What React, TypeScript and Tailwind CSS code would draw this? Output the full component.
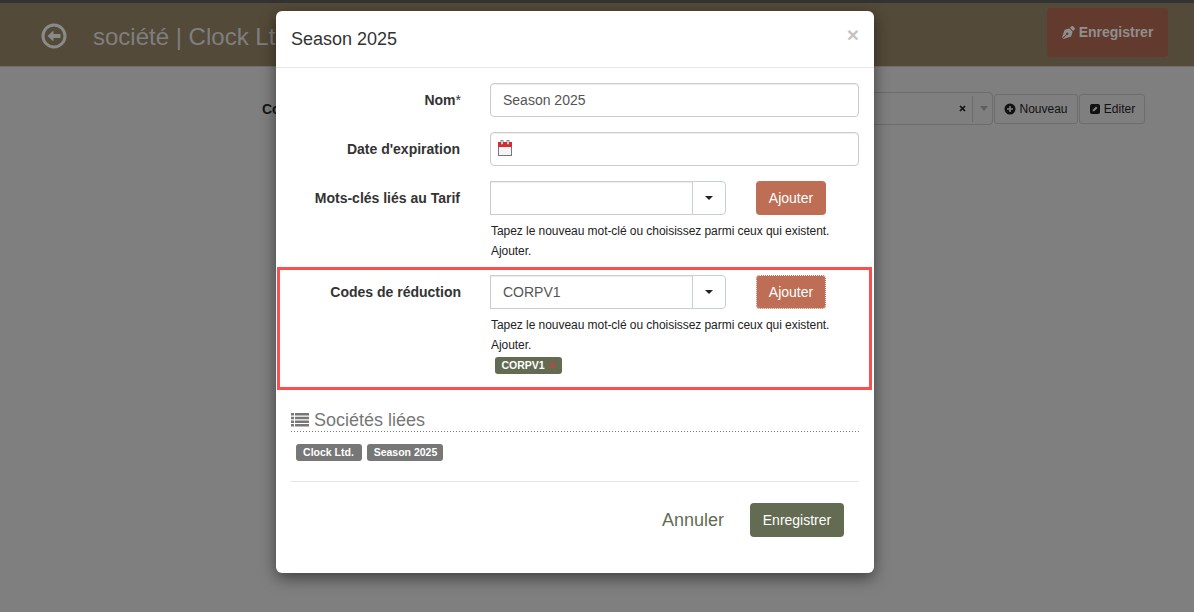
import React from "react";
import { FaPenNib } from "react-icons/fa";

const Caret = () => <span className="block w-0 h-0 border-x-[4px] border-x-transparent border-t-[4px] border-t-[#222]" />;

const Help = () => (
  <p className="text-[12px] leading-[20px] tracking-[-0.05px] text-[#222] mt-[6px] ml-[1px]">
    Tapez le nouveau mot-clé ou choisissez parmi ceux qui existent.<br />Ajouter.
  </p>
);

const Combo = ({ value, focus }: { value?: string; focus?: boolean }) => (
  <div className="flex items-start">
    <div className="w-[236px] h-[34px] flex bg-white">
      <div className="w-[202px] px-[12px] border border-r-0 border-[#ccc] text-[14px] leading-[32px] text-[#555] shadow-[inset_0_1px_1px_rgba(0,0,0,0.075)]">{value}</div>
      <div className="w-[34px] border border-[#c6ced6] rounded-r-[4px] flex items-center justify-center"><Caret /></div>
    </div>
    <button className={`ml-[30px] w-[70px] h-[34px] rounded-[4px] bg-[#bd6e55] text-white text-[14px] ${focus ? "outline-1 outline-dotted outline-white -outline-offset-1" : ""}`}>Ajouter</button>
  </div>
);

const Label = ({ children }: { children: React.ReactNode }) => (
  <div className="w-[184px] text-right text-[14px] font-bold leading-[20px] text-[#333] pt-[7px] shrink-0">{children}</div>
);

const Badge = ({ children, cls }: { children: React.ReactNode; cls: string }) => (
  <span className={`inline-flex items-center justify-center h-[17px] rounded-[3px] text-[10.5px] font-bold text-white ${cls}`}>{children}</span>
);

export default function App() {
  return (
    <div className="relative w-[1194px] h-[612px] overflow-hidden bg-[#7f7f7f] font-['Liberation_Sans',Arial,sans-serif]">
      <div className="h-[67px] bg-[#544a39] border-t-[3px] border-[#333] border-b border-b-[#6f6f6f] flex items-center pl-[41px] pr-[26px]">
        <svg width="26" height="26" viewBox="0 0 26 26" className="mr-[26px] mt-[2px]">
          <circle cx="13" cy="13" r="11" fill="none" stroke="#8a8a88" strokeWidth="3" />
          <path d="M6.5 13 L12.5 7.5 V11 H19.5 V15 H12.5 V18.5 Z" fill="#8a8a88" />
        </svg>
        <span className="text-[24px] text-[#7f7f7f] mt-[4px]">société | Clock Ltd.</span>
        <button className="ml-auto w-[121px] h-[49px] mb-[4px] rounded-[4px] bg-[#633b2e] text-[#918f8d] text-[14px] font-bold flex items-center justify-center gap-[4px]">
          <FaPenNib size={13} color="#918f8d" />
          Enregistrer
        </button>
      </div>

      <div className="flex items-start h-[60px] pt-[27px] pl-[262px]">
        <span className="text-[14px] font-bold text-[#151515] leading-[20px] pt-[5px] w-[606px]">Codes de réduction</span>
        <div className="w-[125px] h-[33px] -mt-[2px] border border-[#6d6d6d] rounded-r-[4px] flex items-center justify-end">
          <svg width="7" height="7" viewBox="0 0 7 7" className="mr-[6px]"><path d="M1 1l5 5M6 1l-5 5" stroke="#111" strokeWidth="1.7" /></svg>
          <span className="h-[26px] border-l border-[#6d6d6d]" />
          <span className="ml-[7px] mr-[4px] w-0 h-0 border-x-[4px] border-x-transparent border-t-[5px] border-t-[#5f5f5f]" />
        </div>
        <button className="ml-[1px] h-[30px] w-[84px] border border-[#6d6d6d] rounded-[3px] text-[12px] text-[#111] flex items-center justify-center gap-[3px]">
          <svg width="12" height="12" viewBox="0 0 12 12"><circle cx="6" cy="6" r="5.5" fill="#111" /><path d="M6 3v6M3 6h6" stroke="#7f7f7f" strokeWidth="1.6" /></svg>
          Nouveau
        </button>
        <button className="ml-[1px] h-[30px] w-[66px] border border-[#6d6d6d] rounded-[3px] text-[12px] text-[#111] flex items-center justify-center gap-[3px]">
          <svg width="12" height="12" viewBox="0 0 12 12"><rect x="1" y="1" width="10" height="10" rx="2" fill="#111" /><path d="M3.5 8.5 L4 6.5 L7 3.5 L8.5 5 L5.5 8 Z" fill="#7f7f7f" /></svg>
          Editer
        </button>
      </div>

      <div className="absolute left-[276px] top-[11px] w-[598px] h-[562px] rounded-[6px] bg-white shadow-[0_5px_15px_rgba(0,0,0,0.5)]">
        <div className="h-[57px] border-b border-[#e5e5e5] flex items-center justify-between px-[15px]">
          <span className="text-[18px] text-[#333]">Season 2025</span>
          <span className="text-[21px] font-bold text-[#c4c4c4] -mt-[10px] leading-none">×</span>
        </div>

        <div className="flex pt-[15px]">
          <div className="ml-[1px] flex">
            <Label>Nom<span className="font-normal">*</span></Label>
          </div>
          <div className="ml-[29px] w-[369px] h-[34px] border border-[#ccc] rounded-[4px] px-3 text-[14px] leading-[32px] text-[#555] shadow-[inset_0_1px_1px_rgba(0,0,0,0.075)]">Season 2025</div>
        </div>
        <div className="flex pt-[15px]">
          <Label>Date d'expiration</Label>
          <div className="ml-[30px] w-[369px] h-[34px] border border-[#ccc] rounded-[4px] pl-[7px] pt-[7px] shadow-[inset_0_1px_1px_rgba(0,0,0,0.075)]">
            <svg width="14" height="17" viewBox="0 0 14 17">
              <rect x="0.5" y="2.5" width="13" height="13" fill="#f4f4f4" stroke="#777" />
              <rect x="0" y="2" width="14" height="5" fill="#e0262e" />
              <rect x="3" y="0.5" width="2" height="4" fill="#fff" stroke="#666" strokeWidth="0.7" />
              <rect x="9" y="0.5" width="2" height="4" fill="#fff" stroke="#666" strokeWidth="0.7" />
            </svg>
          </div>
        </div>
        <div className="flex pt-[15px]">
          <Label>Mots-clés liés au Tarif</Label>
          <div className="ml-[30px]">
            <Combo />
            <Help />
          </div>
        </div>

        <div className="mt-[6px] mx-[1px] w-[595px] h-[123px] border-[3px] border-[#ff4d4d] flex pt-[4px]">
          <div className="-ml-[3px] mt-[1px] flex">
            <Label>Codes de réduction</Label>
          </div>
          <div className="ml-[29px] mt-[1px]">
            <Combo value="CORPV1" focus />
            <Help />
            <div className="flex ml-[5px] mt-[2px]">
              <Badge cls="bg-[#636b52] w-[67px]">CORPV1<svg width="7" height="7" viewBox="0 0 7 7" className="ml-[4px]"><path d="M1 1l5 5M6 1l-5 5" stroke="#b34a44" strokeWidth="1.8" /></svg></Badge>
            </div>
          </div>
        </div>

        <div className="mx-[15px] mt-[19px] h-[22px] flex items-center gap-[5px] text-[18px] leading-[22px] text-[#777]">
          <svg width="18" height="14" viewBox="0 0 18 14" fill="#777">
            <path d="M0 0h3v2.5H0zM4 0h14v2.5H4zM0 3.7h3v2.5H0zM4 3.7h14v2.5H4zM0 7.4h3v2.5H0zM4 7.4h14v2.5H4zM0 11.1h3v2.5H0zM4 11.1h14v2.5H4z" />
          </svg>
          Sociétés liées
        </div>
        <div className="mx-[15px] h-[1px] bg-[repeating-linear-gradient(to_right,#777_0,#777_1px,transparent_1px,transparent_3px)]" />
        <div className="flex gap-[5px] ml-[20px] mt-[12px]">
          <Badge cls="bg-[#777] w-[66px] pr-[1px]">Clock Ltd.</Badge>
          <Badge cls="bg-[#777] w-[76px] pl-[1px]">Season 2025</Badge>
        </div>
        <div className="mx-[15px] mt-[20px] border-t border-[#e5e5e5]" />
        <div className="flex items-center justify-end mt-[21px] pr-[30px]">
          <span className="text-[18px] text-[#636b52]">Annuler</span>
          <button className="ml-[26px] w-[94px] h-[34px] rounded-[4px] bg-[#636b52] text-white text-[14px]">Enregistrer</button>
        </div>
      </div>
    </div>
  );
}
